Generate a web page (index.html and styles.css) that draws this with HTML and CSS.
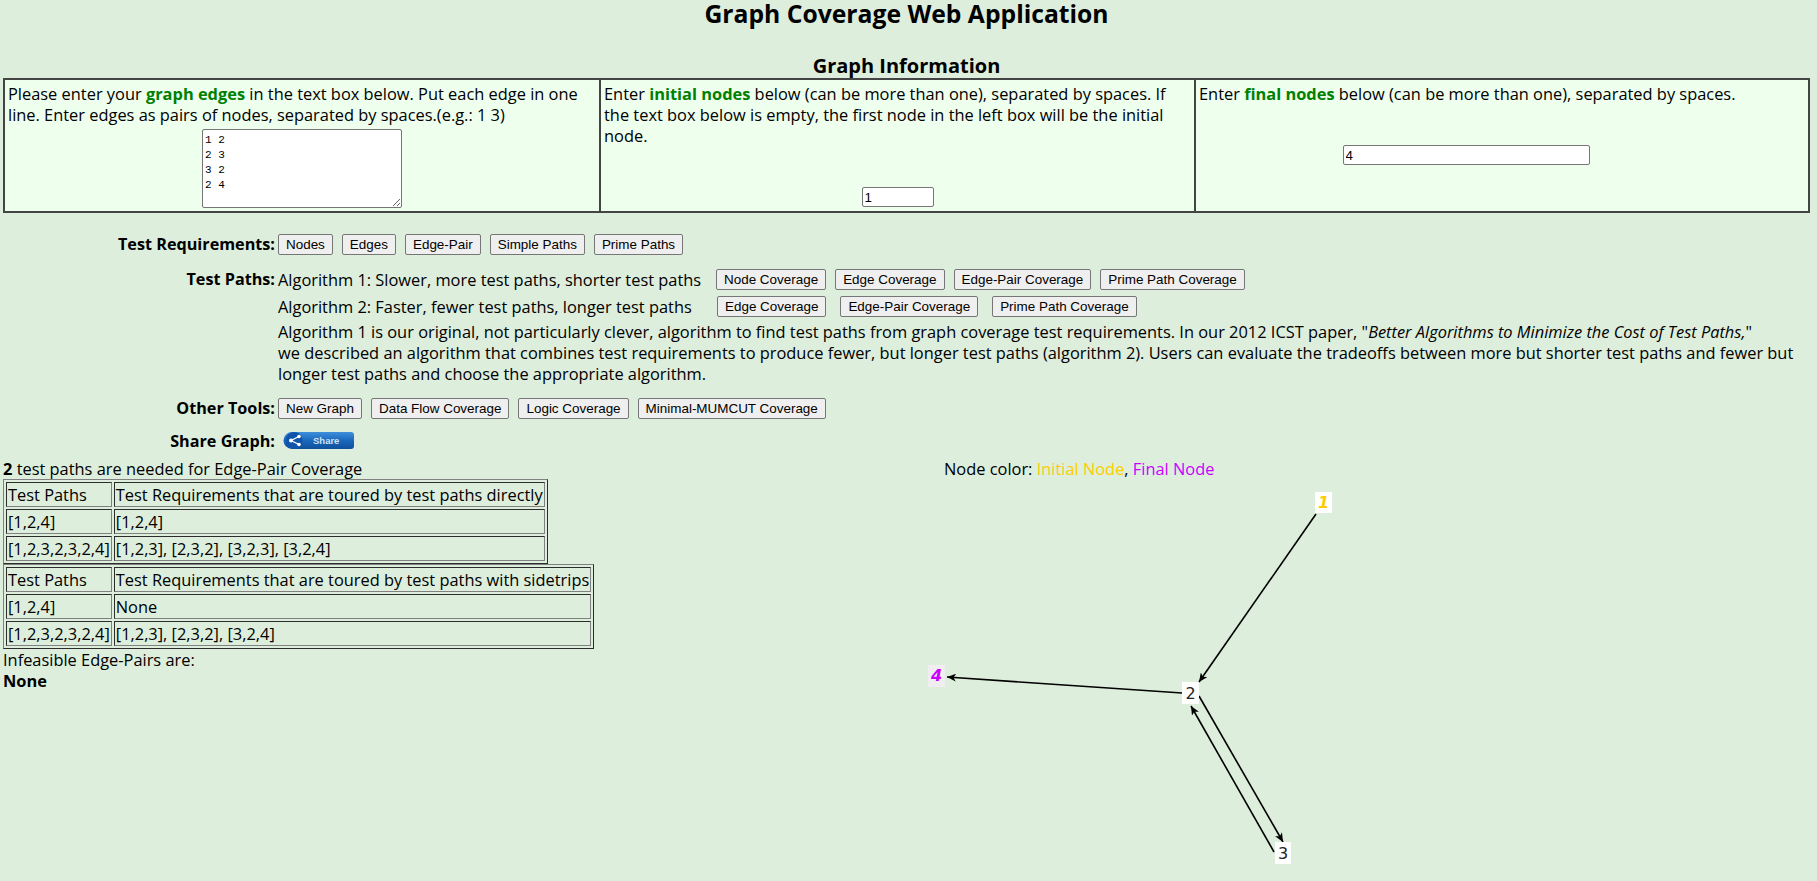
FILE: index.html
```html
<!DOCTYPE html>
<html lang="en">
  <head>
    <meta charset="UTF-8" />
    <meta name="viewport" content="width=device-width, initial-scale=1" />
    <title>Graph Coverage Web Application</title>
    <link rel="stylesheet" href="styles.css">
  </head>
  <body>
    <h1 class="page-title">Graph Coverage Web Application</h1>
    <h2 class="section-title">Graph Information</h2>

    <table class="info-table">
      <tr>
        <td class="edges-cell">
          <p>Please enter your <strong>graph edges</strong> in the text box below. Put each edge in one line. Enter edges as pairs of nodes, separated by spaces.(e.g.: 1 3)</p>
          <div class="field edges-field">
            <textarea class="edges-input">1 2
2 3
3 2
2 4</textarea>
          </div>
        </td>
        <td class="initial-cell">
          <p>Enter <strong>initial nodes</strong> below (can be more than one), separated by spaces. If the text box below is empty, the first node in the left box will be the initial node.</p>
          <div class="field initial-field">
            <input class="initial-input" type="text" value="1" />
          </div>
        </td>
        <td>
          <p>Enter <strong>final nodes</strong> below (can be more than one), separated by spaces.</p>
          <div class="field final-field">
            <input class="final-input" type="text" value="4" />
          </div>
        </td>
      </tr>
    </table>

    <div class="tools">
      <div class="tool-label req-label">Test Requirements:</div>
      <div class="btn-row req-row">
        <button>Nodes</button>
        <button>Edges</button>
        <button>Edge-Pair</button>
        <button>Simple Paths</button>
        <button>Prime Paths</button>
      </div>

      <div class="tool-label paths-label">Test Paths:</div>
      <div class="paths-col">
        <div class="btn-row algo-one">
          <span class="algo-text">Algorithm 1: Slower, more test paths, shorter test paths</span>
          <button>Node Coverage</button>
          <button>Edge Coverage</button>
          <button>Edge-Pair Coverage</button>
          <button>Prime Path Coverage</button>
        </div>
        <div class="btn-row algo-two">
          <span class="algo-text">Algorithm 2: Faster, fewer test paths, longer test paths</span>
          <button>Edge Coverage</button>
          <button>Edge-Pair Coverage</button>
          <button>Prime Path Coverage</button>
        </div>
        <p class="algo-note">Algorithm 1 is our original, not particularly clever, algorithm to find test paths from graph coverage test requirements. In our 2012 ICST paper, "<em>Better Algorithms to Minimize the Cost of Test Paths,</em>"<br>we described an algorithm that combines test requirements to produce fewer, but longer test paths (algorithm 2). Users can evaluate the tradeoffs between more but shorter test paths and fewer but longer test paths and choose the appropriate algorithm.</p>
      </div>

      <div class="tool-label other-label">Other Tools:</div>
      <div class="btn-row other-row">
        <button>New Graph</button>
        <button>Data Flow Coverage</button>
        <button>Logic Coverage</button>
        <button>Minimal-MUMCUT Coverage</button>
      </div>

      <div class="tool-label share-label">Share Graph:</div>
      <div class="share-row">
        <svg class="share-btn" width="71" height="19" viewBox="0 0 71 19">
          <defs>
            <linearGradient id="shareBlue" x1="0" y1="0" x2="0" y2="1">
              <stop offset="0" stop-color="#3f8fdc" />
              <stop offset="0.5" stop-color="#1a68bd" />
              <stop offset="1" stop-color="#0f4f9a" />
            </linearGradient>
          </defs>
          <path d="M9 1H68a3 3 0 0 1 3 3V15a3 3 0 0 1-3 3H9A8.5 8.5 0 0 1 9 1Z" fill="url(#shareBlue)" />
          <circle cx="11" cy="9.5" r="8.5" fill="#0e55ab" />
          <path d="M16 5.5L8 9.5L16 13.5" fill="none" stroke="#fff" stroke-width="1.3" />
          <circle cx="8" cy="9.5" r="2" fill="#fff" />
          <circle cx="16" cy="5.5" r="1.8" fill="#fff" />
          <circle cx="16" cy="13.5" r="1.8" fill="#fff" />
          <text class="share-text" x="30" y="13">Share</text>
        </svg>
      </div>
    </div>

    <div class="results">
      <div class="results-left">
        <div><strong>2</strong> test paths are needed for Edge-Pair Coverage</div>
        <table class="path-table" border="1">
          <tr><td>Test Paths</td><td>Test Requirements that are toured by test paths directly</td></tr>
          <tr><td>[1,2,4]</td><td>[1,2,4]</td></tr>
          <tr><td>[1,2,3,2,3,2,4]</td><td>[1,2,3], [2,3,2], [3,2,3], [3,2,4]</td></tr>
        </table>
        <table class="path-table" border="1">
          <tr><td>Test Paths</td><td>Test Requirements that are toured by test paths with sidetrips</td></tr>
          <tr><td>[1,2,4]</td><td>None</td></tr>
          <tr><td>[1,2,3,2,3,2,4]</td><td>[1,2,3], [2,3,2], [3,2,4]</td></tr>
        </table>
        <div>Infeasible Edge-Pairs are:</div>
        <div><strong>None</strong></div>
      </div>

      <div class="results-right">
        <div class="legend">Node color: <span class="initial-color">Initial Node</span>, <span class="final-color">Final Node</span></div>
        <svg class="graph" width="420" height="396" viewBox="925 485 420 396">
          <defs>
            <marker id="head" markerUnits="userSpaceOnUse" markerWidth="10" markerHeight="8" refX="9" refY="4" orient="auto">
              <path d="M0 0L9 4L0 8L2.5 4Z" fill="#000" />
            </marker>
          </defs>
          <line class="edge" x1="1316" y1="515" x2="1199" y2="683" />
          <line class="edge" x1="1182" y1="694" x2="947" y2="678" />
          <line class="edge" x1="1199" y1="697" x2="1283" y2="843" />
          <line class="edge" x1="1274" y1="853" x2="1191" y2="707" />

          <rect class="node" x="1315" y="493" width="17" height="21" />
          <text class="node-label initial-node" x="1323.5" y="509">1</text>
          <rect class="node" x="1182" y="683" width="17" height="22" />
          <text class="node-label" x="1190.5" y="700">2</text>
          <rect class="node" x="1275" y="843" width="16" height="22" />
          <text class="node-label" x="1283" y="860">3</text>
          <rect class="node node-grey" x="928" y="666" width="17" height="22" />
          <text class="node-label final-node" x="936.5" y="682">4</text>
        </svg>
      </div>
    </div>
  </body>
</html>
```

FILE: styles.css
```css
body {
  margin: 0;
  padding: 0 3px;
  background-color: #ddeedd;
  font-family: "Open Sans", "Liberation Sans", sans-serif;
  font-size: 16.4px;
  line-height: 21px;
  color: #000;
}

.page-title {
  margin: 0;
  padding-right: 4px;
  height: 27px;
  line-height: 27px;
  font-size: 24.7px;
  font-weight: bold;
  text-align: center;
}

.section-title {
  margin: 23px 0 0;
  padding-right: 4px;
  height: 28px;
  line-height: 32px;
  font-size: 20px;
  font-weight: bold;
  text-align: center;
}

.info-table {
  width: 1807px;
  height: 135px;
  table-layout: fixed;
  border-collapse: collapse;
  background-color: #eeffee;
}

.info-table td {
  border: 2px solid #444;
  padding: 3px 3px 2px;
  vertical-align: top;
}

.edges-cell {
  width: 588px;
}

.initial-cell {
  width: 587px;
}

.info-table p {
  margin: 0;
}

.info-table strong {
  color: #008000;
}

.field {
  text-align: center;
}

.edges-field {
  margin-top: 4px;
}

.initial-field {
  margin-top: 41px;
}

.final-field {
  margin-top: 41px;
  padding-right: 72px;
}

textarea,
input {
  box-sizing: border-box;
  margin: 0;
  background: #fff;
  border: 1px solid #767676;
  border-radius: 2px;
  color: #000;
  vertical-align: top;
}

.edges-input {
  width: 200px;
  height: 79px;
  padding: 3px 2px 2px;
  font-family: "Liberation Mono", monospace;
  font-size: 11px;
  line-height: 15px;
}

.initial-input,
.final-input {
  height: 20px;
  padding: 1px 2px;
  font-family: "Liberation Sans", sans-serif;
  font-size: 13.33px;
}

.initial-input {
  width: 72px;
}

.final-input {
  width: 247px;
}

.tools {
  display: grid;
  grid-template-columns: 272px 1fr;
  column-gap: 3px;
  margin-top: 21px;
}

.tool-label {
  font-size: 16.2px;
  font-weight: bold;
  text-align: right;
}

.btn-row {
  display: flex;
  align-items: center;
  column-gap: 9px;
}

button {
  box-sizing: border-box;
  height: 21px;
  margin: 0;
  padding: 0 7px;
  background: #efefef;
  border: 1px solid #767676;
  border-radius: 2px;
  font-family: "Liberation Sans", sans-serif;
  font-size: 13.45px;
  color: #000;
  white-space: nowrap;
}

.paths-label,
.paths-col {
  margin-top: 14px;
}

.algo-one .algo-text {
  width: 429px;
}

.algo-two {
  margin-top: 6px;
  column-gap: 14px;
}

.algo-two .algo-text {
  width: 425px;
}

.algo-note {
  margin: 4px 0 0;
  width: 1526px;
}

.other-label,
.other-row {
  margin-top: 14px;
}

.share-label,
.share-row {
  margin-top: 12px;
}

.share-row {
  padding-left: 5px;
  height: 20px;
}

.share-btn {
  display: block;
}

.share-text {
  font-family: "Liberation Sans", sans-serif;
  font-size: 9.5px;
  font-weight: bold;
  fill: #cfe2f5;
}

.results {
  display: flex;
  margin-top: 6px;
}

.results-left {
  width: 941px;
}

.path-table {
  border-spacing: 2px;
}

.path-table td {
  padding: 1px;
}

.legend {
  height: 21px;
}

.initial-color {
  color: #ffcc00;
}

.final-color {
  color: #cc00ff;
}

.graph {
  display: block;
  margin: 5px 0 0 -19px;
}

.edge {
  stroke: #000;
  stroke-width: 1.6;
  marker-end: url(#head);
}

.node {
  fill: #fff;
}

.node-grey {
  fill: #f0eef0;
}

.node-label {
  font-family: "DejaVu Sans", sans-serif;
  font-size: 16px;
  text-anchor: middle;
  fill: #222;
}

.initial-node,
.final-node {
  font-weight: bold;
  font-style: italic;
}

.initial-node {
  fill: #ffcc00;
}

.final-node {
  fill: #cc00ff;
}
```
